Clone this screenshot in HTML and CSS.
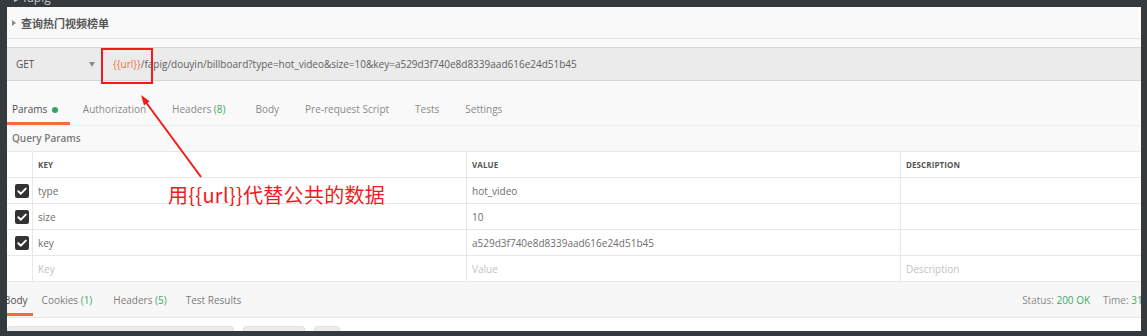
FILE: index.html
```html
<!DOCTYPE html>
<html lang="zh">
<head>
<meta charset="utf-8">
<title>查询热门视频榜单</title>
<link rel="stylesheet" href="styles.css">
</head>
<body>
<div class="topstrip"><span class="peek">▸ fapig</span></div>
<div class="panel">
  <div class="title"><span class="caret"></span><span class="title-text">查询热门视频榜单</span></div>

  <div class="urlbar">
    <div class="method"><span>GET</span><span class="drop"></span></div>
    <div class="url"><span class="var">{{url}}</span>/fapig/douyin/billboard?type=hot_video&amp;size=10&amp;key=a529d3f740e8d8339aad616e24d51b45</div>
  </div>

  <div class="tabs">
    <div class="tab active">Params <span class="dot"></span></div>
    <div class="tab">Authorization</div>
    <div class="tab wide-right">Headers <span class="count">(8)</span></div>
    <div class="tab">Body</div>
    <div class="tab">Pre-request Script</div>
    <div class="tab">Tests</div>
    <div class="tab">Settings</div>
  </div>

  <div class="qp">Query Params</div>

  <div class="table">
    <div class="cell cb"></div>
    <div class="cell head">KEY</div>
    <div class="cell head">VALUE</div>
    <div class="cell head">DESCRIPTION</div>

    <div class="cell cb"><span class="check"><svg viewBox="0 0 14 14" width="14" height="14"><path d="M3.3 7.2 L5.9 9.7 L10.8 4.6" fill="none" stroke="#fff" stroke-width="1.9" stroke-linecap="round" stroke-linejoin="round"/></svg></span></div>
    <div class="cell">type</div>
    <div class="cell">hot_video</div>
    <div class="cell"></div>

    <div class="cell cb"><span class="check"><svg viewBox="0 0 14 14" width="14" height="14"><path d="M3.3 7.2 L5.9 9.7 L10.8 4.6" fill="none" stroke="#fff" stroke-width="1.9" stroke-linecap="round" stroke-linejoin="round"/></svg></span></div>
    <div class="cell">size</div>
    <div class="cell">10</div>
    <div class="cell"></div>

    <div class="cell cb"><span class="check"><svg viewBox="0 0 14 14" width="14" height="14"><path d="M3.3 7.2 L5.9 9.7 L10.8 4.6" fill="none" stroke="#fff" stroke-width="1.9" stroke-linecap="round" stroke-linejoin="round"/></svg></span></div>
    <div class="cell">key</div>
    <div class="cell">a529d3f740e8d8339aad616e24d51b45</div>
    <div class="cell"></div>

    <div class="cell cb"></div>
    <div class="cell ph">Key</div>
    <div class="cell ph">Value</div>
    <div class="cell ph">Description</div>
  </div>

  <div class="resp">
    <div class="rtab active">Body</div>
    <div class="rtab">Cookies <span class="count">(1)</span></div>
    <div class="rtab">Headers <span class="count">(5)</span></div>
    <div class="rtab">Test Results</div>
    <div class="status">Status: <span class="count">200 OK</span><span class="time">Time: <span class="count">318 ms</span></span></div>
  </div>

  <div class="tools">
    <div class="tool wide"></div>
    <div class="tool mid"></div>
    <div class="tool small"></div>
  </div>

  <svg class="annot" width="400" height="200" viewBox="0 0 400 200">
    <rect x="95" y="42" width="50" height="34" fill="none" stroke="#f21a1a" stroke-width="2"/>
    <line x1="194" y1="170" x2="138" y2="94" stroke="#f21a1a" stroke-width="2"/>
    <polygon points="134,88 142.6,94.2 137.0,98.4" fill="#f21a1a"/>
  </svg>
  <div class="note">用{{url}}代替公共的数据</div>
</div>
</body>
</html>
```

FILE: styles.css
```css
html, body {
  margin: 0;
  padding: 0;
}
body {
  background: #343a3e;
  height: 336px;
  overflow: hidden;
  font-family: "Open Sans", "Noto Sans", "Noto Sans CJK SC", sans-serif;
  font-size: 10px;
  color: #606060;
}
.topstrip {
  height: 7px;
  overflow: hidden;
}
.peek {
  display: block;
  margin-top: -9px;
  padding-left: 14px;
  color: #c8c8c8;
  font-size: 12px;
  line-height: 14px;
}
.panel {
  position: relative;
  margin: 0 6px 0 7px;
  height: 324px;
  overflow: hidden;
  background: #f9f9f9;
}
.title {
  height: 31px;
  border-bottom: 1px solid #e4e4e4;
  display: flex;
  align-items: center;
  padding-left: 5px;
}
.caret {
  width: 0;
  height: 0;
  border-left: 4px solid #8a8a8a;
  border-top: 3.5px solid transparent;
  border-bottom: 3.5px solid transparent;
  margin-right: 5px;
}
.title-text {
  font-family: "Noto Sans CJK SC", sans-serif;
  font-weight: 700;
  font-size: 11px;
  color: #555;
  margin-top: 1px;
}
.urlbar {
  margin-top: 8px;
  height: 32px;
  border-top: 1px solid #d6d6d6;
  border-bottom: 1px solid #d6d6d6;
  background: #ebebeb;
  display: flex;
  align-items: center;
}
.method {
  width: 97px;
  box-sizing: border-box;
  padding: 0 9px 0 9px;
  display: flex;
  justify-content: space-between;
  align-items: center;
  color: #505050;
  font-size: 10px;
}
.drop {
  width: 0;
  height: 0;
  border-top: 5px solid #8c8c8c;
  border-left: 3.5px solid transparent;
  border-right: 3.5px solid transparent;
}
.url {
  padding-left: 9px;
  color: #606060;
  font-size: 10px;
  white-space: nowrap;
}
.var {
  color: #f0713a;
}
.tabs {
  margin-top: 14px;
  display: flex;
  border-bottom: 1px solid #ececec;
}
.tab {
  padding: 1px 13px 0;
  line-height: 26px;
  color: #8a8a8a;
  border-bottom: 3px solid transparent;
  white-space: nowrap;
}
.tab:first-child {
  padding-left: 5px;
  padding-right: 12px;
}
.tab.wide-right {
  padding-right: 17px;
}
.tab.active {
  color: #505050;
  border-bottom-color: #f26b3a;
}
.dot {
  display: inline-block;
  width: 6px;
  height: 6px;
  border-radius: 50%;
  background: #2fa85c;
  margin-left: 2px;
  vertical-align: 0;
}
.count {
  color: #3daa66;
}
.qp {
  height: 25px;
  line-height: 25px;
  padding-left: 5px;
  font-weight: 600;
  color: #7a7a7a;
}
.table {
  display: grid;
  grid-template-columns: 25px 434px 434px 1fr;
  grid-auto-rows: 26px;
  background: #fff;
  border-top: 1px solid #e8e8e8;
}
.cell {
  border-bottom: 1px solid #e8e8e8;
  border-left: 1px solid #e8e8e8;
  display: flex;
  align-items: center;
  padding-left: 5px;
  color: #6e6e6e;
  white-space: nowrap;
  overflow: hidden;
  box-sizing: border-box;
}
.cell.cb {
  border-left: none;
  padding-left: 8px;
}
.cell.head {
  font-size: 8px;
  font-weight: 700;
  color: #555;
  letter-spacing: 0.1px;
}
.cell.ph {
  color: #c2c2c2;
}
.check {
  width: 14px;
  height: 14px;
  background: #333;
  border-radius: 2px;
  display: flex;
}
.resp {
  display: flex;
  align-items: flex-start;
  height: 35px;
  border-bottom: 1px solid #e6e6e6;
  background: #f7f7f7;
  margin-left: -8px;
}
.rtab {
  padding: 5px 5px 0;
  line-height: 26px;
  color: #7c7c7c;
  border-bottom: 3px solid transparent;
  white-space: nowrap;
  margin-right: 2px;
}
.rtab.active {
  color: #505050;
  border-bottom-color: #f26b3a;
}
.rtab:nth-child(2) {
  margin-left: 2px;
}
.rtab:nth-child(3) {
  margin-left: 9px;
}
.rtab:nth-child(4) {
  margin-left: 7px;
}
.status {
  margin-left: auto;
  margin-right: -24px;
  padding-top: 5px;
  line-height: 26px;
  white-space: nowrap;
  color: #8a8a8a;
}
.time {
  margin-left: 13px;
}
.tools {
  background: #fff;
  height: 40px;
  padding-top: 8px;
  display: flex;
  gap: 9px;
}
.tool {
  height: 24px;
  background: #ececec;
  border: 1px solid #e2e2e2;
  border-radius: 3px;
}
.tool.wide { width: 225px; margin-left: 0; }
.tool.mid { width: 60px; }
.tool.small { width: 24px; }
.annot {
  position: absolute;
  left: 0;
  top: 0;
  pointer-events: none;
}
.note {
  position: absolute;
  left: 161px;
  top: 175px;
  font-family: "Noto Sans CJK SC", sans-serif;
  font-size: 20px;
  letter-spacing: 0.3px;
  line-height: 26px;
  color: #f21a1a;
  white-space: nowrap;
}
```
